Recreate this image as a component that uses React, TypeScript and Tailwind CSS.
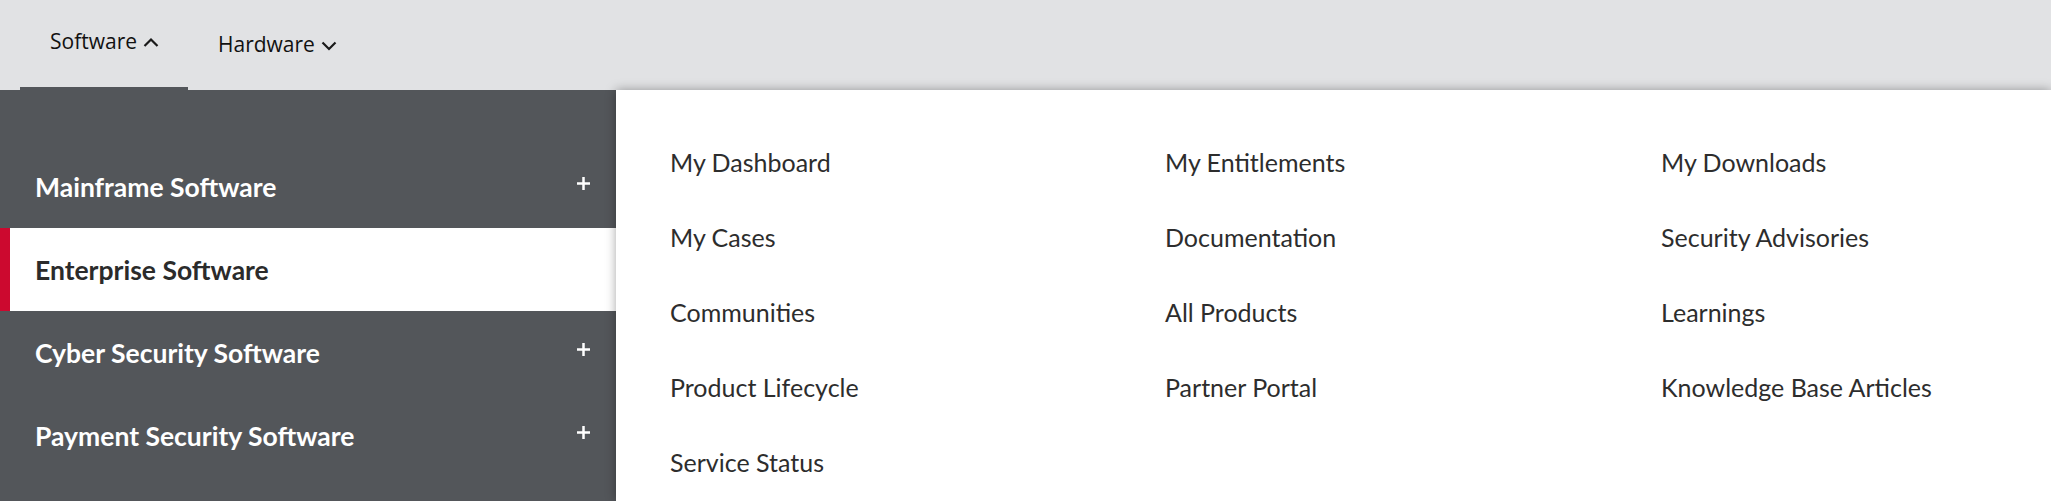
import React from 'react';

const categories = [
  { label: 'Mainframe Software', expandable: true },
  { label: 'Enterprise Software', active: true },
  { label: 'Cyber Security Software', expandable: true },
  { label: 'Payment Security Software', expandable: true },
];

const columns = [
  ['My Dashboard', 'My Cases', 'Communities', 'Product Lifecycle', 'Service Status'],
  ['My Entitlements', 'Documentation', 'All Products', 'Partner Portal'],
  ['My Downloads', 'Security Advisories', 'Learnings', 'Knowledge Base Articles'],
];

function Chevron({ up }: { up?: boolean }) {
  return (
    <svg width="16" height="11" viewBox="0 0 16 11" fill="none" className="ml-[6px]">
      <path
        d={up ? 'M1.5 9 L8 2.5 L14.5 9' : 'M1.5 2.5 L8 9 L14.5 2.5'}
        stroke="#1a1a1a"
        strokeWidth="2.2"
      />
    </svg>
  );
}

function Plus() {
  return (
    <svg width="13" height="13" viewBox="0 0 13 13" className="mt-[-8px]">
      <path d="M6.5 0 V13 M0 6.5 H13" stroke="#fff" strokeWidth="2.5" />
    </svg>
  );
}

export default function App() {
  return (
    <div className="h-[501px] w-full overflow-hidden bg-white">
      {/* top nav */}
      <div className="flex h-[90px] items-stretch bg-[#e1e2e4] pl-[20px] font-['Open_Sans',sans-serif] text-[21px] text-[#111]">
        <div className="flex w-[168px] items-center border-b-[3px] border-[#53565a] pb-[3px] pl-[30px]">
          Software
          <Chevron up />
        </div>
        <div className="flex items-center pl-[30px]">
          Hardware
          <Chevron />
        </div>
      </div>

      <div className="flex h-[411px]">
        {/* left categories */}
        <div className="w-[616px] shrink-0 bg-[#53565a] pt-[55px] font-['Lato',sans-serif]">
          {categories.map((c) => (
            <div
              key={c.label}
              className={
                c.active
                  ? 'flex h-[83px] items-center border-l-[10px] border-[#cc092f] bg-white pl-[25px] pt-[2px] text-[26.5px] font-bold text-[#2b2b2b]'
                  : 'flex h-[83px] items-center justify-between pl-[35px] pr-[26px] pt-[2px] text-[26.5px] font-bold text-white'
              }
            >
              <span>{c.label}</span>
              {c.expandable && <Plus />}
            </div>
          ))}
        </div>

        {/* links panel */}
        <div className="relative z-10 flex-1 bg-white pl-[54px] pt-[35px] font-['Lato',sans-serif] text-[25px] text-[#2d2d2d] shadow-[0_0_10px_rgba(0,0,0,0.35)]">
          <div className="grid grid-cols-[495px_496px_1fr]">
            {columns.map((col, i) => (
              <div key={i} className="flex flex-col">
                {col.map((link) => (
                  <a key={link} href="#" className="flex h-[75px] items-center">
                    {link}
                  </a>
                ))}
              </div>
            ))}
          </div>
        </div>
      </div>
    </div>
  );
}
